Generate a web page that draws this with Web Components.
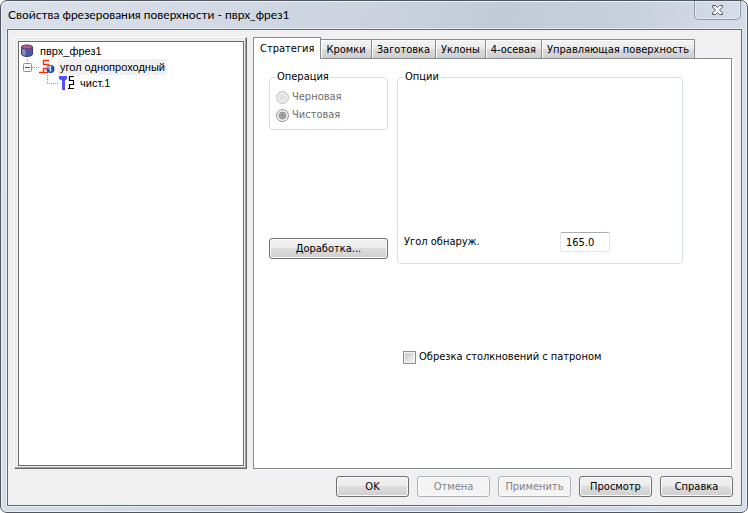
<!DOCTYPE html>
<html lang="ru">
<head>
<meta charset="utf-8">
<title>Свойства фрезерования поверхности</title>
<style>
	body {
		margin: 0;
		font: 11px/16px "DejaVu Sans Condensed", "Noto Sans", sans-serif;
		color: #000;
		background: #fff;
	}
	.content {
		flex: 1;
		display: flex;
		gap: 6px;
	}
	.strategy {
		display: grid;
		grid-template-columns: 119px 1fr;
		column-gap: 9px;
		padding: 10px 48px 9px 15px;
	}
	.left {
		display: flex;
		flex-direction: column;
		justify-content: space-between;
		padding-bottom: 5px;
	}
	.clip {
		grid-column: 2;
		padding: 85px 0 0 6px;
	}
</style>
</head>
<body>
<dialog-window caption="Свойства фрезерования поверхности - пврх_фрез1">
	<div class="content">
		<tree-panel>
			<tree-node icon="surface" label="пврх_фрез1">
				<tree-node icon="operation" guide="box" label="угол однопроходный" selected>
					<tree-node icon="tool" guide="corner" label="чист.1"></tree-node>
				</tree-node>
			</tree-node>
		</tree-panel>
		<tab-panel tabs="Стратегия|Кромки|Заготовка|Уклоны|4-осевая|Управляющая поверхность">
			<div class="strategy">
				<div class="left">
					<group-box legend="Операция">
						<radio-option disabled>Черновая</radio-option>
						<radio-option disabled checked>Чистовая</radio-option>
					</group-box>
					<push-button>Доработка...</push-button>
				</div>
				<group-box legend="Опции" tall>
					<number-field label="Угол обнаруж." value="165.0"></number-field>
				</group-box>
				<check-option class="clip">Обрезка столкновений с патроном</check-option>
			</div>
		</tab-panel>
	</div>
	<push-button slot="actions">OK</push-button>
	<push-button slot="actions" disabled>Отмена</push-button>
	<push-button slot="actions" disabled>Применить</push-button>
	<push-button slot="actions">Просмотр</push-button>
	<push-button slot="actions">Справка</push-button>
</dialog-window>

<script>
(function()  {
	const attach = (el, html) => {
		const template = document.createElement("template");
		template.innerHTML = html;
		const root = el.attachShadow({mode: "open"});
		root.appendChild(template.content.cloneNode(true));
		return root;
	};

	class DialogWindow extends HTMLElement {
		constructor() {
			super();
			const root = attach(this, `
				<style>
				:host {
					display: flex;
					flex-direction: column;
					box-sizing: border-box;
					min-height: 100vh;
					padding: 0 5px 6px 6px;
					border: 1px solid #50555d;
					border-radius: 7px;
					background: linear-gradient(100deg, #dbe1ea 0, #d3dae5 25%, #c2ccd9 60%, #c6d0dc 75%, #d6deea 90%);
					box-shadow: inset 0 0 0 1px #eef2f7;
				}
				header {
					display: flex;
					justify-content: space-between;
					height: 28px;
				}
				h1 {
					margin: 0;
					padding: 0 1px;
					font: 12px/28px Lato, "Open Sans", sans-serif;
				}
				button {
					width: 47px;
					height: 19px;
					margin: 0 1px 0 0;
					padding: 0;
					border: 1px solid #8e97a5;
					border-top: 0;
					border-radius: 0 0 5px 5px;
					background: transparent;
					box-shadow: inset 0 0 0 1px #e6ebf2;
				}
				svg {
					display: block;
					margin: 0 auto;
				}
				.client {
					flex: 1;
					display: flex;
					flex-direction: column;
					padding: 7px 8px 8px 6px;
					border: 1px solid #656b73;
					background: #f0f0f0;
					box-shadow: 0 0 0 1px #e6ecf3;
				}
				slot:not([name]) {
					flex: 1;
					display: flex;
				}
				footer {
					display: flex;
					justify-content: flex-end;
					gap: 8px;
					padding-top: 7px;
				}
				::slotted([slot=actions]) {
					width: 73px;
				}
				</style>
				<header>
					<h1></h1>
					<button type="button" aria-label="Закрыть">
						<svg width="13" height="12" viewBox="0 0 13 12">
							<path d="M1.5 1.5h3l2 2 2-2h3v1.500L8.500 6l3 3v1.500h-3l-2-2-2 2h-3V9l3-3-3-3z" fill="#fff" stroke="#555a6b"/>
						</svg>
					</button>
				</header>
				<div class="client">
					<slot></slot>
					<footer><slot name="actions"></slot></footer>
				</div>
			`);
			root.querySelector("h1").textContent = this.getAttribute("caption");
		}
	}

	class TreePanel extends HTMLElement {
		constructor() {
			super();
			attach(this, `
				<style>
				:host {
					display: block;
					flex: 0 0 233px;
					box-sizing: border-box;
					padding: 3px 2px 2px 3px;
					border: 1px solid;
					border-color: #fff #696969 #696969 #fff;
					box-shadow: inset -1px -1px #a0a0a0, inset 1px 1px #e3e3e3;
					font: 11px/16px "Liberation Sans", sans-serif;
				}
				.list {
					height: 100%;
					box-sizing: border-box;
					padding-top: 1px;
					border: 1px solid #696969;
					background: #fff;
				}
				</style>
				<div class="list" role="tree"><slot></slot></div>
			`);
		}
	}

	const icons = {
		surface: `
			<path d="M2.500 4v7c0 1.400 2.500 2.500 5.500 2.500s5.500-1.100 5.500-2.500V4z" fill="#4f549f"/>
			<path d="M3 5v7c1 .700 2 1 3.500 1V5z" fill="#8589cc"/>
			<path d="M2.500 4v7c0 1.400 2.500 2.500 5.500 2.500s5.500-1.100 5.500-2.500V4" fill="none" stroke="#3b3f6d"/>
			<ellipse cx="8" cy="4" rx="5.500" ry="2" fill="#b5589f" stroke="#553865"/>`,
		operation: `
			<path d="M10 1.500H4.500v4h5v4h-5v4M0 13.500h9" fill="none" stroke="#ff2a00" stroke-width="1.400"/>
			<circle cx="11.500" cy="10" r="4" fill="#2446b0"/>
			<circle cx="10" cy="8.500" r="2" fill="#86a2e6"/>
			<path d="M11.500 7v1.500M11.500 9.500v3" stroke="#fff" stroke-width="1.600"/>`,
		tool: `
			<path d="M0 1h8v3L6 5.500V15H3V5.500L0 4z" fill="#5050ff"/>
			<path d="M15 1.500h-4.500v4h4v4h-4v4M9 13.500h6" fill="none" stroke="#000" stroke-width="1.200"/>`
	};

	const guides = {
		box: `
			<path d="M8.500 0v4M13 8.500h7" stroke="#909090" stroke-dasharray="1 1"/>
			<rect x="4.500" y="4.500" width="8" height="8" rx="1" fill="#f7f7f7" stroke="#8f8f8f"/>
			<path d="M6 8.500h5" stroke="#3c50c0"/>`,
		corner: `<path d="M8.500 0v8.500M8 8.500h11" fill="none" stroke="#909090" stroke-dasharray="1 1"/>`
	};

	class TreeNode extends HTMLElement {
		constructor() {
			super();
			const guide = this.getAttribute("guide");
			const root = attach(this, `
				<style>
				:host {
					display: block;
				}
				.row {
					display: flex;
					height: 16px;
					white-space: nowrap;
				}
				.label {
					margin-left: 3px;
					padding: 0 2px;
				}
				:host([selected]) .label {
					background: #f0f0f0;
				}
				:host([guide=corner]) {
					padding-left: 20px;
				}
				</style>
				<div class="row" role="treeitem">
					${guide ? `<svg width="20" height="16">${guides[guide]}</svg>` : ""}
					<svg width="16" height="16">${icons[this.getAttribute("icon")]}</svg>
					<span class="label"></span>
				</div>
				<slot></slot>
			`);
			root.querySelector(".label").textContent = this.getAttribute("label");
		}
	}

	class TabPanel extends HTMLElement {
		constructor() {
			super();
			const root = attach(this, `
				<style>
				:host {
					flex: 1;
					display: flex;
					flex-direction: column;
				}
				nav {
					display: flex;
					align-items: flex-end;
				}
				button {
					height: 19px;
					margin: 0 0 0 -1px;
					padding: 2px 5px 0;
					border: 1px solid #898c95;
					border-bottom: 0;
					background: linear-gradient(#f3f3f3 0, #ebebeb 50%, #dddddd 50%, #cdcdcd 100%);
					box-shadow: inset 1px 1px #fcfcfc;
					font: inherit;
					color: inherit;
					white-space: nowrap;
				}
				button[aria-selected=true] {
					height: 22px;
					margin: 0 0 -1px;
					padding: 0 6px;
					background: #fff;
					z-index: 1;
				}
				.page {
					flex: 1;
					margin-right: 1px;
					border: 1px solid #898c95;
					background: #fff;
					box-shadow: 2px 1px #fff;
				}
				</style>
				<nav role="tablist"></nav>
				<div class="page" role="tabpanel"><slot></slot></div>
			`);
			const nav = root.querySelector("nav");
			this.getAttribute("tabs").split("|").forEach((name, i) => {
				const tab = document.createElement("button");
				tab.type = "button";
				tab.setAttribute("role", "tab");
				tab.setAttribute("aria-selected", i === 0);
				tab.textContent = name;
				nav.appendChild(tab);
			});
		}
	}

	class GroupBox extends HTMLElement {
		constructor() {
			super();
			const root = attach(this, `
				<style>
				:host {
					display: block;
				}
				fieldset {
					height: 100%;
					box-sizing: border-box;
					min-width: 0;
					margin: 0;
					padding: 3px 6px 5px;
					border: 1px solid #d5dfe5;
					border-radius: 4px;
				}
				:host([tall]) fieldset {
					display: flex;
					flex-direction: column;
					justify-content: flex-end;
					min-height: 195px;
					padding-bottom: 11px;
				}
				legend {
					padding: 0 1px;
				}
				</style>
				<fieldset>
					<legend></legend>
					<slot></slot>
				</fieldset>
			`);
			root.querySelector("legend").textContent = this.getAttribute("legend");
		}
	}

	class RadioOption extends HTMLElement {
		constructor() {
			super();
			const root = attach(this, `
				<style>
				:host {
					display: block;
				}
				label {
					display: flex;
					align-items: center;
					gap: 3px;
					height: 18px;
				}
				input {
					appearance: none;
					width: 13px;
					height: 13px;
					margin: 0;
					border: 1px solid #c0c0c0;
					border-radius: 50%;
					background: radial-gradient(#dedede, #f4f4f4);
				}
				input:checked {
					border-color: #909090;
					background: radial-gradient(#888 0, #aaa 30%, #909090 45%, #f2f2f2 55%);
				}
				:host([disabled]) {
					color: #6d6d6d;
				}
				</style>
				<label><input type="radio"><slot></slot></label>
			`);
			const input = root.querySelector("input");
			input.disabled = this.hasAttribute("disabled");
			input.checked = this.hasAttribute("checked");
		}
	}

	class CheckOption extends HTMLElement {
		constructor() {
			super();
			attach(this, `
				<style>
				:host {
					display: block;
				}
				label {
					display: flex;
					align-items: center;
					gap: 3px;
				}
				input {
					appearance: none;
					width: 13px;
					height: 13px;
					margin: 0;
					padding: 1px;
					border: 1px solid #8e8f8f;
					background: linear-gradient(135deg, #c4c9cf, #f6f6f6) content-box, #f4f4f4;
				}
				</style>
				<label><input type="checkbox"><slot></slot></label>
			`);
		}
	}

	class NumberField extends HTMLElement {
		constructor() {
			super();
			const root = attach(this, `
				<style>
				:host {
					display: flex;
					justify-content: space-between;
					align-items: center;
					padding-right: 66px;
				}
				input {
					box-sizing: border-box;
					width: 50px;
					height: 20px;
					padding: 0 5px;
					border: 1px solid #e2e3ea;
					border-top-color: #abadb3;
					border-radius: 2px;
					background: #fff;
					font: inherit;
					color: inherit;
				}
				</style>
				<label for="value"></label>
				<input id="value" type="text">
			`);
			root.querySelector("label").textContent = this.getAttribute("label");
			root.getElementById("value").value = this.getAttribute("value");
		}
	}

	class PushButton extends HTMLElement {
		constructor() {
			super();
			const root = attach(this, `
				<style>
				:host {
					display: block;
				}
				button {
					display: block;
					width: 100%;
					height: 21px;
					padding: 0;
					border: 1px solid #707070;
					border-radius: 3px;
					background: linear-gradient(#f2f2f2 0, #ebebeb 50%, #dddddd 50%, #cfcfcf 100%);
					box-shadow: inset 0 0 0 1px #fafafa;
					font: inherit;
					color: inherit;
				}
				button:disabled {
					border-color: #adb2b5;
					background: #f4f4f4;
					color: #838383;
				}
				</style>
				<button type="button"><slot></slot></button>
			`);
			root.querySelector("button").disabled = this.hasAttribute("disabled");
		}
	}

	customElements.define("dialog-window", DialogWindow);
	customElements.define("tree-panel", TreePanel);
	customElements.define("tree-node", TreeNode);
	customElements.define("tab-panel", TabPanel);
	customElements.define("group-box", GroupBox);
	customElements.define("radio-option", RadioOption);
	customElements.define("check-option", CheckOption);
	customElements.define("number-field", NumberField);
	customElements.define("push-button", PushButton);
})();
</script>
</body>
</html>
